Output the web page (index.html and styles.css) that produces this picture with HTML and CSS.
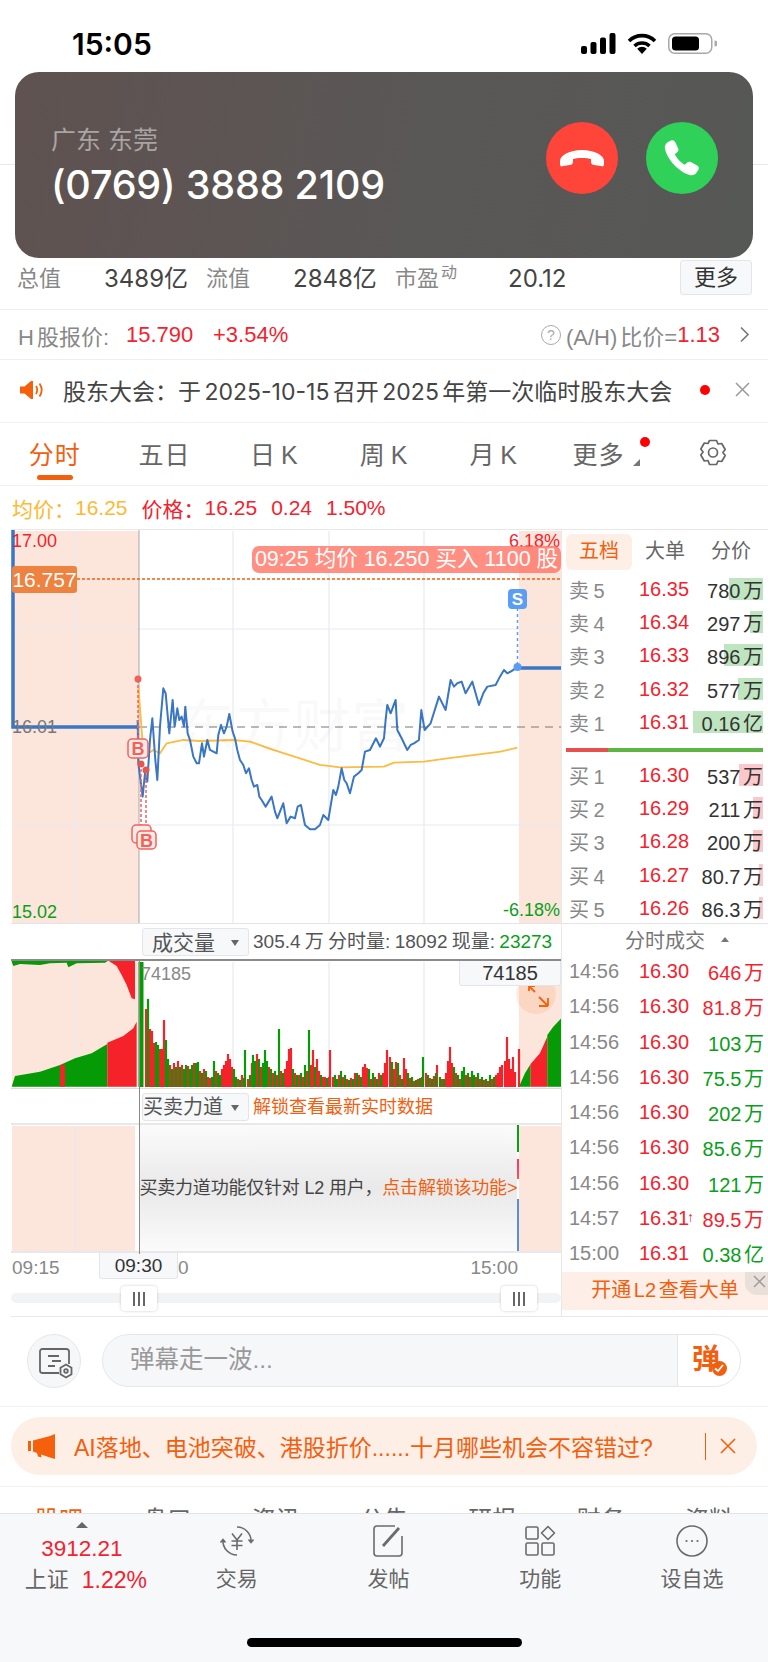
FILE: index.html
```html
<!DOCTYPE html>
<html lang="zh-CN">
<head>
  <meta charset="UTF-8">
  <meta name="viewport" content="width=device-width, initial-scale=1.0">
  <title>分时</title>
  <link rel="stylesheet" href="styles.css">
</head>
<body>
  <div class="phone">
    <div class="status">
      <span class="clock">15:05</span>
      <div class="status-icons">
        <svg width="35" height="21" viewBox="0 0 35 21"><rect x="0" y="13" width="6" height="8" rx="2"/><rect x="9.500" y="9" width="6" height="12" rx="2"/><rect x="19" y="4.500" width="6" height="16.500" rx="2"/><rect x="28.500" y="0" width="6" height="21" rx="2"/></svg>
        <svg width="30" height="21" viewBox="0 0 30 21"><path d="M2 8A18.500 18.500 0 0 1 28 8" fill="none" stroke="#000" stroke-width="3.600"/><path d="M7.500 13A11 11 0 0 1 22.500 13" fill="none" stroke="#000" stroke-width="3.600"/><path d="M15 21l-4.800-5.200a6.600 6.600 0 0 1 9.600 0z"/></svg>
        <svg width="49" height="21" viewBox="0 0 49 21"><rect x=".75" y=".75" width="43" height="19.500" rx="6" fill="none" stroke="#a8a8a8" stroke-width="1.500"/><rect x="4" y="3.500" width="27" height="14" rx="3.500"/><path d="M46.500 7.500a3 3 0 0 1 0 6z" fill="#a8a8a8"/></svg>
      </div>
    </div>
    <div class="stock-head"></div>
    <div class="stock-hidden"></div>

    <div class="call">
      <div class="call-info">
        <div class="call-place">广东 东莞</div>
        <div class="call-num">(0769) 3888 2109</div>
      </div>
      <div class="call-btns">
        <svg class="call-btn" viewBox="0 0 72 72"><circle cx="36" cy="36" r="36" fill="#ff453a"/><path fill="#fff" d="M14 39C14 33 24 28 36 28S58 33 58 39V42C58 44 57 45 55 44L48 43C46 43 45 41.500 45 40V37C42 35.500 30 35.500 27 37V40C27 41.500 26 43 24 43L17 44C15 45 14 44 14 42Z"/></svg>
        <svg class="call-btn" viewBox="0 0 72 72"><circle cx="36" cy="36" r="36" fill="#30d158"/><path fill="#fff" d="M22 20l3-1.500c2-.7 3.500 0 4.300 1.800l2.800 6c.7 1.600.3 3-1 4l-2.300 2c1.800 4 6 8.500 10 10.500l2.400-2.200c1.200-1 2.700-1.200 4-.4l6 3.400c1.600 1 2 2.500 1.200 4.200l-1.800 2.800c-1.500 2.200-4 3.200-7 2.400C33 50 21.500 38 19 27c-.7-3 .6-5.600 3-7z"/></svg>
      </div>
    </div>

    <div class="stats">
      <span class="lbl w86">总值</span><span class="val w102">3489亿</span>
      <span class="lbl w87">流值</span><span class="val w102">2848亿</span>
      <span class="lbl w113">市盈<sup>动</sup></span><span class="val">20.12</span>
      <span class="more-btn">更多</span>
    </div>

    <div class="hrow">
      <span class="lbl hname">H 股报价:</span>
      <span class="red hprice">15.790</span>
      <span class="red hpct">+3.54%</span>
      <span class="hright">
        <span class="qmark">?</span>
        <span class="lbl">(A/H) 比价=</span><span class="red">1.13</span>
        <svg class="chev" width="11" height="17" viewBox="0 0 11 17"><path d="M2 1.500L9 8.500L2 15.500" fill="none" stroke="#777" stroke-width="1.600"/></svg>
      </span>
    </div>

    <div class="notice">
      <svg width="24" height="18" viewBox="0 0 24 18"><path fill="#f4600c" d="M0 5.500h4.500L11 0h2v18h-2L4.500 12.500H0z"/><path d="M16 5c1.500 2.500 1.500 5.500 0 8M19.500 2.500c2.700 4 2.700 9 0 13" fill="none" stroke="#f4600c" stroke-width="1.800"/></svg>
      <span class="notice-text">股东大会：于 2025-10-15 召开 2025 年第一次临时股东大会</span>
      <span class="reddot"></span>
      <svg class="notice-x" width="15" height="15" viewBox="0 0 15 15"><path d="M1 1L14 14M14 1L1 14" stroke="#999" stroke-width="1.500"/></svg>
    </div>

    <div class="periods">
      <span class="period on">分时</span>
      <span class="period">五日</span>
      <span class="period">日 K</span>
      <span class="period">周 K</span>
      <span class="period">月 K</span>
      <span class="period more">更多<i class="dot"></i><i class="tri"></i></span>
      <span class="period">
        <svg width="30" height="30" viewBox="0 0 30 30" fill="none" stroke="#666" stroke-width="1.700"><path d="M11.500 2.500h7l1.500 3.500 3.700-.5 3.500 6-2.300 3 2.300 3-3.500 6-3.700-.5-1.500 3.500h-7L10 22.500l-3.700.5-3.500-6 2.300-3-2.300-3 3.500-6 3.700.5z" stroke-linejoin="round"/><circle cx="15" cy="14.500" r="4.500"/></svg>
      </span>
    </div>

    <div class="pricebar">
      <span class="yellow">均价：</span><span class="yellow gap-r">16.25</span>
      <span class="red">价格：</span><span class="red gap-r">16.25</span><span class="red gap-r">0.24</span><span class="red">1.50%</span>
    </div>

    <div class="main">
      <div class="left">
        <div class="vline"></div>

        <div class="chart">
          <svg class="chart-svg" viewBox="11 530 550 394" width="550" height="394">
            <rect x="12" y="531" width="127" height="392" fill="#fce6db"/>
            <rect x="519" y="531" width="42" height="392" fill="#fce6db"/>
            <g stroke="#e6e9f2" stroke-width="1.200">
              <path d="M75 531V923M233 531V923M329 531V923M424 531V923"/>
              <path d="M12 629H561M12 825H561"/>
            </g>
            <path d="M139 530V923" stroke="#a8a8a8" stroke-width="1"/>
            <path d="M139 727H561" stroke="#777" stroke-width="1.200" stroke-dasharray="8 6"/>
            <path d="M77 579H561" stroke="#f4600c" stroke-width="1.400" stroke-dasharray="3 2"/>
            <path d="M13 530V727H137" fill="none" stroke="#3a76c4" stroke-width="3.500"/>
            <path d="M520 668H561" stroke="#3a76c4" stroke-width="3.500"/>
            <g transform="translate(0 410) scale(.3333)" fill="none" stroke-linejoin="round">
              <polyline stroke="#fdbb3f" stroke-width="5.500" points="415,830 428,1000 445,1030 460,1020 480,1030 500,1000 550,990 600,993 700,990 750,995 820,1020 900,1045 960,1065 1020,1072 1152,1070 1182,1058 1272,1055 1342,1045 1502,1025 1552,1013"/>
              <polyline stroke="#3a76c4" stroke-width="6" points="413,930 415,1060 428,1160 435,1090 442,1115 450,990 457,925 466,1050 472,1110 480,950 490,835 497,850 508,970 518,870 524,950 532,895 538,930 545,920 552,950 556,890 563,970 570,990 580,1040 590,1060 597,1060 606,1000 612,1040 622,990 630,1020 640,1025 650,1030 655,975 663,945 672,970 680,950 688,912 698,965 705,985 712,1020 720,1050 730,1065 738,1090 747,1075 755,1110 762,1130 772,1125 778,1160 785,1170 797,1190 806,1175 815,1160 825,1205 832,1225 842,1200 850,1180 860,1240 872,1220 885,1225 893,1190 903,1185 915,1245 930,1258 945,1258 960,1245 970,1215 985,1230 1000,1140 1008,1155 1015,1130 1025,1075 1033,1110 1040,1120 1050,1150 1062,1100 1075,1090 1085,1080 1095,1025 1110,1020 1128,985 1140,1010 1152,985 1157,930 1162,885 1172,910 1187,870 1192,960 1205,985 1222,1020 1232,1005 1242,1000 1257,990 1264,900 1274,960 1292,940 1317,860 1337,900 1352,810 1362,830 1372,820 1385,815 1397,850 1417,815 1427,850 1437,885 1450,850 1462,830 1487,825 1500,800 1512,780 1522,790 1532,785 1552,772"/>
            </g>
            <path d="M138 680V739" stroke="#f0635c" stroke-width="1.500" stroke-dasharray="3 2"/>
            <path d="M141 764V826M146 770V832" stroke="#f0635c" stroke-width="1.500" stroke-dasharray="3 2"/>
            <circle cx="138" cy="679" r="3.500" fill="#ef625c"/>
            <circle cx="141" cy="764" r="3.500" fill="#e2584f"/>
            <circle cx="146" cy="770" r="3.500" fill="#e2584f"/>
            <path d="M517.500 608V667" stroke="#5a9df5" stroke-width="1.500" stroke-dasharray="3 3"/>
            <circle cx="517.500" cy="667" r="4" fill="#5a9df5"/>
            <g class="mark-b">
              <rect x="128" y="739" width="20" height="19" rx="4"/><text x="138" y="755">B</text>
              <rect x="132" y="825" width="19" height="18" rx="4"/>
              <rect x="137" y="831" width="19" height="18" rx="4"/><text x="146.500" y="847">B</text>
            </g>
            <rect x="508" y="589" width="19" height="20" rx="4" fill="#5a9df5"/>
            <text class="mark-s" x="517.500" y="605">S</text>
          </svg>
          <span class="watermark">东方财富</span>
          <span class="ax red ax-top">17.00</span>
          <span class="ax gray ax-mid">16.01</span>
          <span class="ax green ax-bot">15.02</span>
          <span class="ax red ax-rt">6.18%</span>
          <span class="ax green ax-rb">-6.18%</span>
          <span class="price-tag">16.757</span>
          <span class="tip">09:25 均价 16.250 买入 1100 股</span>
        </div>

        <div class="subhead">
          <span class="drop">成交量<i class="caret"></i></span>
          <span class="subinfo">305.4 万 分时量: 18092 现量: <span class="green">23273</span></span>
        </div>

        <div class="volume">
          <svg class="chart-svg" viewBox="11 961 550 128" width="550" height="128">
            <rect x="12" y="961" width="127" height="126" fill="#fce6db"/>
            <rect x="519" y="961" width="42" height="126" fill="#fce6db"/>
            <path d="M75 962V1087M233 962V1087M329 962V1087M424 962V1087" stroke="#e6e9f2" stroke-width="1.200"/>
            <g transform="translate(0 920) scale(.3333)">
              <polygon fill="#069a06" points="35,122 325,122 315,128 230,130 205,142 200,128 150,130 120,135 60,132 40,138 35,125"/>
              <polygon fill="#f5222a" points="325,122 405,122 405,238 395,235 380,195 365,165 350,138"/>
              <polygon fill="#069a06" points="35,500 45,468 120,455 180,435 225,415 275,400 322,372 322,500"/>
              <polygon fill="#f5222a" points="180,435 195,435 195,500 180,500"/>
              <polygon fill="#f5222a" points="322,368 370,348 400,325 410,305 410,500 322,500"/>
              <polygon fill="#069a06" points="1557,500 1575,460 1592,432 1592,500"/>
              <polygon fill="#f5222a" points="1592,432 1620,400 1642,350 1642,500 1592,500"/>
              <polygon fill="#069a06" points="1642,345 1660,320 1684,295 1684,500 1642,500"/>
            </g>
            <path d="M141 1087V962" stroke="#069a06" stroke-width="5"/>
            <path fill="none" stroke="#f5222a" stroke-width="2.200" d="M146 1087v-78M150 1087v-58M152 1087v-56M154 1087v-44M160 1087v-38M162 1087v-38M164 1087v-67M170 1087v-22M174 1087v-24M178 1087v-26M182 1087v-22M188 1087v-21M194 1087v-24M200 1087v-16M204 1087v-18M208 1087v-10M210 1087v-9M216 1087v-16M222 1087v-18M224 1087v-22M226 1087v-26M228 1087v-33M230 1087v-28M232 1087v-20M238 1087v-8M242 1087v-12M248 1087v-8M252 1087v-24M257 1087v-33M261 1087v-20M269 1087v-20M273 1087v-14M277 1087v-12M281 1087v-16M285 1087v-18M287 1087v-26M289 1087v-38M291 1087v-39M295 1087v-14M299 1087v-12M303 1087v-10M307 1087v-16M311 1087v-22M313 1087v-37M317 1087v-28M319 1087v-16M323 1087v-10M325 1087v-10M329 1087v-10M330 1087v-37M333 1087v-10M339 1087v-12M343 1087v-10M347 1087v-8M351 1087v-9M355 1087v-14M359 1087v-12M363 1087v-20M365 1087v-23M367 1087v-19M371 1087v-8M375 1087v-10M379 1087v-14M383 1087v-14M385 1087v-24M387 1087v-37M390 1087v-30M394 1087v-18M396 1087v-25M400 1087v-12M404 1087v-29M406 1087v-18M410 1087v-9M414 1087v-6M418 1087v-8M422 1087v-10M426 1087v-14M430 1087v-9M434 1087v-11M437 1087v-22M442 1087v-8M446 1087v-14M448 1087v-26M450 1087v-40M452 1087v-24M456 1087v-14M460 1087v-8M466 1087v-12M470 1087v-10M476 1087v-10M480 1087v-8M484 1087v-7M488 1087v-6M492 1087v-8M496 1087v-12M498 1087v-14M500 1087v-20M502 1087v-22M505 1087v-26M507 1087v-50M509 1087v-28M511 1087v-18M513 1087v-30M515 1087v-15M519 1087v-38"/>
            <path fill="none" stroke="#069a06" stroke-width="2.200" d="M148 1087v-88M156 1087v-45M158 1087v-42M166 1087v-47M168 1087v-28M172 1087v-18M176 1087v-20M180 1087v-20M184 1087v-18M186 1087v-22M190 1087v-18M192 1087v-22M196 1087v-24M198 1087v-25M202 1087v-14M206 1087v-16M212 1087v-10M214 1087v-26M218 1087v-14M220 1087v-12M234 1087v-18M236 1087v-10M240 1087v-7M244 1087v-9M245 1087v-37M250 1087v-12M253 1087v-32M255 1087v-26M259 1087v-28M263 1087v-24M265 1087v-37M267 1087v-26M271 1087v-18M275 1087v-16M279 1087v-58M283 1087v-14M293 1087v-18M297 1087v-12M301 1087v-14M305 1087v-22M309 1087v-57M315 1087v-20M321 1087v-12M327 1087v-9M335 1087v-12M337 1087v-8M341 1087v-16M345 1087v-12M349 1087v-7M353 1087v-8M357 1087v-14M361 1087v-10M369 1087v-18M373 1087v-14M377 1087v-8M381 1087v-12M392 1087v-25M398 1087v-24M402 1087v-8M408 1087v-14M412 1087v-10M416 1087v-7M420 1087v-9M423 1087v-30M428 1087v-12M432 1087v-8M436 1087v-14M440 1087v-10M444 1087v-8M454 1087v-20M458 1087v-12M462 1087v-16M464 1087v-20M468 1087v-14M472 1087v-16M474 1087v-12M478 1087v-14M482 1087v-10M486 1087v-8M490 1087v-12M494 1087v-10"/>
          </svg>
          <span class="vol-max">74185</span>
          <span class="vol-box">74185</span>
          <span class="expand">
            <svg width="24" height="24" viewBox="0 0 24 24" fill="none" stroke="#f4600c" stroke-width="1.800"><path d="M3 0V5M3 0H9M3 0L9 6M22 20V12M22 20H13M22 20L13 11"/></svg>
          </span>
        </div>

        <div class="subhead sub2">
          <span class="drop drop2">买卖力道<i class="caret"></i></span>
          <span class="unlock">解锁查看最新实时数据</span>
        </div>

        <div class="force">
          <div class="force-side"></div>
          <div class="force-mid">买卖力道功能仅针对 L2 用户，<span class="orange">点击解锁该功能&gt;</span></div>
          <div class="force-mark"></div>
          <div class="force-end"></div>
        </div>

        <div class="axis">
          <span class="axis-start">09:15</span>
          <span class="axis-box">09:30</span>
          <span>0</span>
          <span class="axis-end">15:00</span>
        </div>

        <div class="slider">
          <div class="track"></div>
          <span class="handle h-left"><i></i><i></i><i></i></span>
          <span class="handle h-right"><i></i><i></i><i></i></span>
        </div>
      </div>

      <div class="right">
        <div class="board">
          <div class="board-tabs">
            <span class="board-tab on">五档</span>
            <span class="board-tab">大单</span>
            <span class="board-tab">分价</span>
          </div>
          <div class="ob"><span class="ob-l">卖 5</span><span class="ob-p">16.35</span><span class="ob-v"><i class="bar sell" style="width:34px"></i><b>780 万</b></span></div>
          <div class="ob"><span class="ob-l">卖 4</span><span class="ob-p">16.34</span><span class="ob-v"><i class="bar sell" style="width:13px"></i><b>297 万</b></span></div>
          <div class="ob"><span class="ob-l">卖 3</span><span class="ob-p">16.33</span><span class="ob-v"><i class="bar sell" style="width:39px"></i><b>896 万</b></span></div>
          <div class="ob"><span class="ob-l">卖 2</span><span class="ob-p">16.32</span><span class="ob-v"><i class="bar sell" style="width:25px"></i><b>577 万</b></span></div>
          <div class="ob"><span class="ob-l">卖 1</span><span class="ob-p">16.31</span><span class="ob-v"><i class="bar sell" style="width:70px"></i><b>0.16 亿</b></span></div>
          <div class="split"><div class="split-bar"><i></i></div></div>
          <div class="ob"><span class="ob-l">买 1</span><span class="ob-p">16.30</span><span class="ob-v"><i class="bar buy" style="width:24px"></i><b>537 万</b></span></div>
          <div class="ob"><span class="ob-l">买 2</span><span class="ob-p">16.29</span><span class="ob-v"><i class="bar buy" style="width:10px"></i><b>211 万</b></span></div>
          <div class="ob"><span class="ob-l">买 3</span><span class="ob-p">16.28</span><span class="ob-v"><i class="bar buy" style="width:10px"></i><b>200 万</b></span></div>
          <div class="ob"><span class="ob-l">买 4</span><span class="ob-p">16.27</span><span class="ob-v"><i class="bar buy" style="width:4px"></i><b>80.7 万</b></span></div>
          <div class="ob"><span class="ob-l">买 5</span><span class="ob-p">16.26</span><span class="ob-v"><i class="bar buy" style="width:4px"></i><b>86.3 万</b></span></div>
        </div>
        <div class="trades-head">分时成交<i class="caret-up"></i></div>
        <div class="tr"><span class="ob-l">14:56</span><span class="ob-p">16.30</span><span class="tr-v red">646 万</span></div>
        <div class="tr"><span class="ob-l">14:56</span><span class="ob-p">16.30</span><span class="tr-v red">81.8 万</span></div>
        <div class="tr"><span class="ob-l">14:56</span><span class="ob-p">16.30</span><span class="tr-v green">103 万</span></div>
        <div class="tr"><span class="ob-l">14:56</span><span class="ob-p">16.30</span><span class="tr-v green">75.5 万</span></div>
        <div class="tr"><span class="ob-l">14:56</span><span class="ob-p">16.30</span><span class="tr-v green">202 万</span></div>
        <div class="tr"><span class="ob-l">14:56</span><span class="ob-p">16.30</span><span class="tr-v green">85.6 万</span></div>
        <div class="tr"><span class="ob-l">14:56</span><span class="ob-p">16.30</span><span class="tr-v green">121 万</span></div>
        <div class="tr"><span class="ob-l">14:57</span><span class="ob-p">16.31<i class="up">↑</i></span><span class="tr-v red">89.5 万</span></div>
        <div class="tr"><span class="ob-l">15:00</span><span class="ob-p">16.31</span><span class="tr-v green">0.38 亿</span></div>
        <div class="l2">开通 L2 查看大单
          <span class="l2-x"><svg width="13" height="13" viewBox="0 0 13 13"><path d="M1 1L12 12M12 1L1 12" stroke="#999" stroke-width="1.400"/></svg></span>
        </div>
      </div>
    </div>

    <div class="comment">
      <span class="c-icon">
        <svg width="34" height="32" viewBox="0 0 34 32" fill="none" stroke="#666" stroke-width="1.800"><path d="M20 25H3.500A2.500 2.500 0 0 1 1 22.500V3.500A2.500 2.500 0 0 1 3.500 1H27.500A2.500 2.500 0 0 1 30 3.500V16"/><path d="M9 8H20M13 13H22M9 18H16"/><path d="M27 16.500l5.500 3.200v6.600L27 29.500l-5.500-3.200v-6.600z"/><circle cx="27" cy="23" r="1.800"/></svg>
      </span>
      <div class="c-input">
        <span class="c-hold">弹幕走一波...</span>
        <span class="c-send">弹<i class="c-check"><svg width="14" height="14" viewBox="0 0 14 14"><path d="M3 7.500L6 10L11 4" fill="none" stroke="#fff" stroke-width="1.800"/></svg></i></span>
      </div>
    </div>

    <div class="promo-wrap">
      <div class="promo">
        <svg width="28" height="25" viewBox="0 0 28 25"><path fill="#f4600c" d="M0 7h3v10H0zM5 6.500L22 2 27 0v25l-5-1.500-9-3 .5 3-3.500-1-1-3.500L5 17.500z"/></svg>
        <span class="promo-text">AI落地、电池突破、港股折价......十月哪些机会不容错过?</span>
        <span class="promo-div"></span>
        <svg width="16" height="16" viewBox="0 0 16 16"><path d="M1 1L15 15M15 1L1 15" stroke="#f4600c" stroke-width="1.600"/></svg>
      </div>
    </div>

    <div class="news-tabs">
      <span class="orange">股吧</span><span>盘口</span><span>资讯</span><span>公告</span><span>研报</span><span>财务</span><span>资料</span>
    </div>

    <div class="nav">
      <div class="nav-item nav-index">
        <i class="nav-caret"></i>
        <span class="red nav-price">3912.21</span>
        <span class="nav-row"><span class="nav-label">上证</span><span class="red">1.22%</span></span>
      </div>
      <div class="nav-item">
        <svg width="36" height="36" viewBox="0 0 36 36" fill="none" stroke="#6b6b6b" stroke-width="1.600"><path d="M18 4A14 14 0 0 1 32 19M29.500 16.500l2.500 3 2.500-3M18 32A14 14 0 0 1 4 17M1.500 19.500l2.500-3 2.500 3"/><path d="M13 10.500l5 6.500 5-6.500M18 17v10M12.500 18h11M12.500 22.500h11"/></svg>
        <span class="nav-label">交易</span>
      </div>
      <div class="nav-item">
        <svg width="36" height="36" viewBox="0 0 36 36" fill="none" stroke="#6b6b6b" stroke-width="1.600"><path d="M25 3H7a3 3 0 0 0-3 3V30a3 3 0 0 0 3 3H29a3 3 0 0 0 3-3V13"/><path d="M13 23L29 5" stroke-width="2.800"/></svg>
        <span class="nav-label">发帖</span>
      </div>
      <div class="nav-item">
        <svg width="36" height="36" viewBox="0 0 36 36" fill="none" stroke="#6b6b6b" stroke-width="1.600"><rect x="4" y="4" width="12" height="12" rx="1.500"/><path d="M26 3.500l6.500 6.500L26 16.500 19.500 10z" stroke-linejoin="round"/><rect x="4" y="20" width="12" height="12" rx="1.500"/><rect x="20" y="20" width="12" height="12" rx="1.500"/></svg>
        <span class="nav-label">功能</span>
      </div>
      <div class="nav-item">
        <svg width="36" height="36" viewBox="0 0 36 36" fill="none" stroke="#6b6b6b" stroke-width="1.600"><circle cx="18" cy="18" r="15"/><circle cx="12.500" cy="18" r="1.100" fill="#6b6b6b" stroke="none"/><circle cx="18" cy="18" r="1.100" fill="#6b6b6b" stroke="none"/><circle cx="23.500" cy="18" r="1.100" fill="#6b6b6b" stroke="none"/></svg>
        <span class="nav-label">设自选</span>
      </div>
      <div class="home-bar"></div>
    </div>
  </div>
</body>
</html>
```

FILE: styles.css
```css
* {
  box-sizing: border-box;
}

body {
  margin: 0;
  background: #fff;
  font-family: "Liberation Sans", "Noto Sans CJK SC", sans-serif;
  color: #333;
}

i {
  font-style: normal;
}

.phone {
  position: relative;
  width: 768px;
  height: 1662px;
  overflow: hidden;
  background: #fff;
}

.red { color: #f5222d; }
.green { color: #0a9e1a; }
.yellow { color: #fdb933; }
.gray { color: #777; }
.orange { color: #f2600f; }

/* status bar */
.status {
  height: 70px;
  padding: 33px 51px 0 72px;
  display: flex;
  justify-content: space-between;
  align-items: flex-start;
}

.clock {
  font-family: Inter, sans-serif;
  font-size: 30px;
  font-weight: 600;
  line-height: 22px;
  color: #000;
}

.status-icons {
  display: flex;
  gap: 11px;
}

.stock-head {
  height: 95px;
  border-bottom: 1px solid #e8e8e8;
}

.stock-hidden {
  height: 93px;
}

/* incoming call */
.call {
  position: absolute;
  top: 72px;
  left: 15px;
  width: 738px;
  height: 186px;
  padding: 0 35px 0 38px;
  border-radius: 24px;
  background: linear-gradient(100deg, #5f5250, #5a5757 55%, #565855);
  display: flex;
  justify-content: space-between;
  align-items: center;
}

.call-place {
  font-size: 25px;
  line-height: 26px;
  color: #a8a5a3;
  margin-left: -2px;
  margin-top: 1px;
}

.call-num {
  font-family: Inter, sans-serif;
  font-size: 39.500px;
  font-weight: 500;
  line-height: 40px;
  letter-spacing: -0.2px;
  color: #fff;
  margin-top: 12px;
  margin-left: -2px;
}

.call-btns {
  display: flex;
  gap: 28px;
  margin-top: -15px;
}

.call-btn {
  width: 72px;
  height: 72px;
}

/* stats */
.stats {
  height: 52px;
  padding: 2px 16px 0 17px;
  border-bottom: 1px solid #ececec;
  display: flex;
  font-size: 22px;
  line-height: 38px;
}

.lbl { color: #888; }
.val { color: #444; font-family: Inter, "Noto Sans CJK SC", sans-serif; font-size: 24px; }
.w86 { width: 87px; }
.w87 { width: 87px; }
.w102 { width: 102px; }
.w113 { width: 113px; }

.stats sup {
  font-size: 16px;
  line-height: 0;
  margin-left: 2px;
}

.more-btn {
  margin-left: auto;
  width: 72px;
  height: 35px;
  line-height: 33px;
  text-align: center;
  background: #f7f8fa;
  border: 1px solid #e3e5ea;
  border-radius: 3px;
}

/* H share row */
.hrow {
  height: 50px;
  padding: 0 18px 0 18px;
  border-bottom: 1px solid #eee;
  display: flex;
  align-items: center;
  font-size: 22px;
  word-spacing: -3px;
}

.hname { width: 108px; }
.hprice { width: 87px; }

.hright {
  margin-left: auto;
  display: flex;
  align-items: center;
}

.qmark {
  width: 20px;
  height: 20px;
  margin-right: 5px;
  border: 1px solid #aaa;
  border-radius: 50%;
  color: #aaa;
  font-size: 14px;
  line-height: 18px;
  text-align: center;
}

.chev { margin-left: 19px; }

/* notice */
.notice {
  height: 63px;
  padding: 0 18px 3px 20px;
  border-bottom: 1px solid #f0f0f0;
  display: flex;
  align-items: center;
}

.notice-text {
  margin-left: 19px;
  font-family: Inter, "Noto Sans CJK SC", sans-serif;
  font-size: 23px;
  word-spacing: -3px;
  color: #444;
  white-space: nowrap;
}

.reddot {
  width: 10px;
  height: 10px;
  margin-left: auto;
  border-radius: 50%;
  background: #f00;
}

.notice-x { margin-left: 25px; }

/* period tabs */
.periods {
  height: 63px;
  border-bottom: 1px solid #f0f0f0;
  display: flex;
}

.period {
  position: relative;
  flex: 1;
  height: 60px;
  display: flex;
  justify-content: center;
  align-items: center;
  font-size: 25px;
  letter-spacing: 1px;
  word-spacing: -3px;
  color: #666;
}

.period.on { color: #f2600f; }

.period.on::after {
  content: "";
  position: absolute;
  left: 37px;
  bottom: 3px;
  width: 36px;
  height: 5px;
  border-radius: 3px;
  background: #f2600f;
}

.more { left: -5px; }

.dot {
  position: absolute;
  left: 96px;
  top: 14px;
  width: 10px;
  height: 10px;
  border-radius: 50%;
  background: #f00;
}

.tri {
  position: absolute;
  left: 89px;
  top: 36px;
  border-left: 7px solid transparent;
  border-bottom: 7px solid #777;
}

/* price line */
.pricebar {
  height: 43px;
  padding: 0 12px;
  display: flex;
  align-items: center;
  font-size: 21px;
}

.gap-r { margin-right: 14px; }

/* main two columns */
.main {
  margin-left: 11px;
  height: 788px;
  border-top: 1px solid #e8e8e8;
  border-bottom: 1px solid #e8e8e8;
  display: flex;
}

.left {
  position: relative;
  width: 550px;
  border-left: 0;
}

.vline {
  position: absolute;
  left: 128px;
  top: 431px;
  width: 1px;
  height: 293px;
  background: #8a8a8a;
  z-index: 2;
}

.chart-svg { display: block; }

.chart {
  position: relative;
  height: 394px;
  border-bottom: 1px solid #e2e4ea;
}

.chart .chart-svg { margin-bottom: -1px; }

.watermark {
  position: absolute;
  left: 166px;
  top: 164px;
  font-size: 58px;
  line-height: 66px;
  color: rgba(0, 0, 0, 0.025);
  white-space: nowrap;
}

.ax {
  position: absolute;
  font-size: 18px;
  line-height: 20px;
}

.ax-top { left: 1px; top: 1px; }
.ax-mid { left: 1px; top: 187px; }
.ax-bot { left: 1px; top: 372px; }
.ax-rt { right: 1px; top: 1px; }
.ax-rb { right: 1px; top: 370px; }

.price-tag {
  position: absolute;
  left: 1px;
  top: 36px;
  width: 65px;
  height: 27px;
  line-height: 27px;
  text-align: center;
  border-radius: 3px;
  background: #ee8240;
  color: #fff;
  font-size: 21px;
}

.tip {
  position: absolute;
  left: 241px;
  top: 16px;
  width: 309px;
  height: 27px;
  line-height: 27px;
  text-align: center;
  border-radius: 7px;
  background: rgba(255, 115, 100, 0.8);
  color: #fff;
  font-size: 21.500px;
  white-space: nowrap;
}

.mark-b rect {
  fill: #ffe9e4;
  stroke: #f0635c;
  stroke-width: 1.500;
}

.mark-b text {
  fill: #f0635c;
  font-size: 18px;
  font-weight: 700;
  text-anchor: middle;
}

.mark-s {
  fill: #fff;
  font-size: 17px;
  font-weight: 700;
  text-anchor: middle;
}

.subhead {
  height: 37px;
  padding: 4px 0 0 131px;
  display: flex;
  align-items: flex-start;
  gap: 4px;
  border-bottom: 2px solid #8a8a8a;
}

.sub2 {
  height: 36px;
  border-bottom: 2px solid #e8e8ec;
  padding-top: 4px;
}

.drop {
  position: relative;
  width: 107px;
  height: 28px;
  padding-left: 9px;
  line-height: 27px;
  font-size: 21px;
  background: #f7f8fa;
  border: 1px solid #e3e5ea;
  border-radius: 3px;
  color: #555;
}

.drop2 { padding-left: 0; font-size: 20px; }

.caret {
  position: absolute;
  right: 9px;
  top: 11px;
  border-left: 4px solid transparent;
  border-right: 4px solid transparent;
  border-top: 6px solid #666;
}

.subinfo {
  font-size: 19px;
  line-height: 28px;
  word-spacing: -1px;
  color: #555;
  white-space: nowrap;
}

.unlock {
  font-size: 18px;
  line-height: 28px;
  color: #f2600f;
}

.volume {
  position: relative;
  height: 128px;
  border-bottom: 1px solid #ddd;
}

.vol-max {
  position: absolute;
  left: 130px;
  top: 3px;
  font-size: 18px;
  line-height: 20px;
  color: #888;
}

.vol-box {
  position: absolute;
  right: 0;
  top: 0;
  width: 102px;
  height: 25px;
  line-height: 25px;
  text-align: center;
  font-size: 20px;
  background: #f7f8fa;
  border: 1px solid #e3e5ea;
  border-top: 0;
  border-radius: 0 0 3px 3px;
  z-index: 2;
}

.expand {
  position: absolute;
  left: 505px;
  top: 13px;
  width: 40px;
  height: 40px;
  padding: 12px 0 0 10px;
  border-radius: 50%;
  background: rgba(244, 150, 100, 0.2);
  clip-path: circle(50%);
}

.force {
  height: 128px;
  display: flex;
  border-bottom: 2px solid #e8e8ec;
}

.force-side {
  width: 124px;
  margin: 1px 5px 0 1px;
  background: linear-gradient(90deg, #fce6db 63px, #e6e9f2 63px, #e6e9f2 64px, #fce6db 64px);
}

.force-mid {
  flex: 1;
  background: linear-gradient(180deg, #fbfbfb, #e9e9e9 50%, #fbfbfb);
  font-size: 18px;
  line-height: 126px;
  letter-spacing: -0.2px;
  color: #444;
  white-space: nowrap;
  margin-left: -1px;
}

.force-mark {
  width: 2px;
  background: linear-gradient(180deg, #0a9e1a 2px, #0a9e1a 27px, #fff 27px, #fff 34px, #f36 34px, #f5535a 54px, #fff 54px, #fff 74px, #5a8fd0 74px);
}

.force-end {
  width: 42px;
  margin-top: 1px;
  background: #fce6db;
}

.axis {
  height: 30px;
  padding: 0 43px 0 1px;
  display: flex;
  font-size: 19px;
  line-height: 30px;
  color: #888;
}

.axis-start { width: 87px; }

.axis-box {
  width: 79px;
  height: 26px;
  line-height: 25px;
  text-align: center;
  color: #333;
  background: #f7f8fa;
  border: 1px solid #e3e5ea;
  border-top: 0;
  border-radius: 0 0 3px 3px;
}

.axis-end { margin-left: auto; }

.slider {
  position: relative;
  height: 32px;
  padding-top: 10px;
}

.track {
  height: 10px;
  border-radius: 5px;
  background: #f2f3f5;
}

.handle {
  position: absolute;
  top: 3px;
  width: 36px;
  height: 25px;
  display: flex;
  justify-content: center;
  align-items: center;
  gap: 3px;
  background: #fff;
  border-radius: 4px;
  box-shadow: 0 0 3px rgba(0, 0, 0, 0.2);
}

.handle i {
  width: 2px;
  height: 14px;
  background: #666;
}

.h-left { left: 110px; }
.h-right { left: 490px; }

/* right column */
.right {
  width: 207px;
  border-left: 1px solid #e8e8e8;
}

.board {
  height: 394px;
  border-bottom: 1px solid #e2e4ea;
}

.board-tabs {
  height: 43px;
  padding: 4px 0 0 4px;
  display: flex;
}

.board-tab {
  width: 66px;
  height: 36px;
  line-height: 35px;
  text-align: center;
  font-size: 20px;
  color: #666;
}

.board-tab.on {
  border-radius: 6px;
  background: #fdeee6;
  color: #f2600f;
}

.ob, .tr {
  position: relative;
  display: flex;
  align-items: center;
  font-size: 20px;
  word-spacing: -3px;
}

.ob { height: 33.200px; }
.tr { height: 35.250px; }

.ob-l {
  width: 72px;
  margin-left: 7px;
  color: #888;
  flex-shrink: 0;
  word-spacing: -1px;
}

.ob-p {
  position: relative;
  width: 44px;
  color: #f5222d;
  text-align: right;
  white-space: nowrap;
  display: block;
  margin-left: -2px;
}

.ob-v {
  margin-left: auto;
  padding-right: 5px;
  white-space: nowrap;
}

.tr-v {
  margin-left: auto;
  padding-right: 4px;
  white-space: nowrap;
}

.ob-v b {
  position: relative;
  font-weight: 400;
  color: #333;
}

.bar {
  position: absolute;
  right: 5px;
  top: 5px;
  height: 22px;
}

.bar.sell { background: #bfe5c0; }
.bar.buy { background: #fbc9cb; }

.up {
  position: absolute;
  left: 48px;
  top: 2px;
  font-size: 14px;
}

.split {
  height: 20px;
  padding: 9px 5px 0 4px;
}

.split-bar {
  height: 4px;
  background: #5cb544;
}

.split-bar i {
  display: block;
  width: 42px;
  height: 4px;
  background: #e8504f;
}

.trades-head {
  position: relative;
  height: 30px;
  padding-top: 2px;
  line-height: 30px;
  text-align: center;
  font-size: 20px;
  color: #777;
}

.caret-up {
  position: absolute;
  left: 159px;
  top: 13px;
  border-left: 4px solid transparent;
  border-right: 4px solid transparent;
  border-bottom: 5px solid #777;
}

.l2 {
  position: relative;
  height: 38px;
  margin-top: 1px;
  line-height: 37px;
  text-align: center;
  font-size: 20px;
  word-spacing: -3px;
  background: #fdefe7;
  color: #f2600f;
}

.l2-x {
  position: absolute;
  right: 0;
  top: 0;
  width: 23px;
  height: 23px;
  padding-left: 5px;
  line-height: 18px;
  background: #e9e0da;
  border-bottom-left-radius: 12px;
}

/* comment box */
.comment {
  height: 90px;
  padding: 17px 27px 0;
  border-bottom: 1px solid #f0f0f0;
  display: flex;
  gap: 21px;
}

.c-icon {
  width: 54px;
  height: 54px;
  padding: 13px 0 0 11px;
  border-radius: 50%;
  background: #f6f7f9;
  border: 1px solid #e5e7ea;
  flex-shrink: 0;
}

.c-input {
  width: 639px;
  height: 53px;
  display: flex;
  justify-content: space-between;
  border: 1px solid #e5e7ea;
  border-radius: 27px;
  background: linear-gradient(90deg, #f6f7f9 574px, #e5e7ea 574px, #e5e7ea 575px, #fff 575px);
}

.c-hold {
  margin-left: 27px;
  font-size: 24.500px;
  line-height: 50px;
  color: #999;
}

.c-send {
  position: relative;
  width: 62px;
  padding-left: 14px;
  font-size: 28px;
  font-weight: 700;
  line-height: 50px;
  color: #f2600f;
}

.c-check {
  position: absolute;
  left: 34px;
  top: 26px;
  width: 15px;
  height: 15px;
  border-radius: 50%;
  background: #f2600f;
  line-height: 0;
}

/* promo banner */
.promo-wrap {
  height: 80px;
  padding: 10px 11px 0;
  border-bottom: 1px solid #f0f0f0;
}

.promo {
  width: 746px;
  height: 58px;
  padding: 0 21px 0 17px;
  display: flex;
  align-items: center;
  border-radius: 29px;
  background: #fdeee6;
}

.promo-text {
  margin-left: 18px;
  font-size: 23px;
  color: #f2600f;
  white-space: nowrap;
}

.promo-div {
  width: 1px;
  height: 27px;
  margin: 0 14px 0 auto;
  background: #f2600f;
}

.news-tabs {
  padding: 21px 35px 0;
  display: flex;
  justify-content: space-between;
  font-size: 24px;
  line-height: 24px;
  color: #666;
}

/* bottom nav */
.nav {
  position: absolute;
  left: 0;
  top: 1513px;
  width: 768px;
  height: 149px;
  padding-left: 3px;
  display: flex;
  align-items: flex-start;
  background: #f7f8fa;
  border-top: 1px solid #e4e4e6;
}

.nav-item {
  width: 152px;
  padding-top: 9px;
  display: flex;
  flex-direction: column;
  align-items: center;
}

.nav-label {
  margin-top: 8px;
  font-size: 21px;
  line-height: 24px;
  color: #666;
}

.nav-index {
  position: relative;
  width: 158px;
  padding-top: 8px;
}

.nav-caret {
  border-left: 6px solid transparent;
  border-right: 6px solid transparent;
  border-bottom: 6px solid #666;
}

.nav-price {
  margin-top: 8px;
  font-size: 22.500px;
  line-height: 26px;
}

.nav-row {
  display: flex;
  gap: 13px;
  margin-left: 8px;
  font-size: 23px;
  line-height: 24px;
  margin-top: 6px;
}

.nav-row .nav-label {
  margin: 0;
  font-size: 22px;
}

.home-bar {
  position: absolute;
  left: 247px;
  top: 124px;
  width: 275px;
  height: 9px;
  border-radius: 5px;
  background: #000;
}
```
